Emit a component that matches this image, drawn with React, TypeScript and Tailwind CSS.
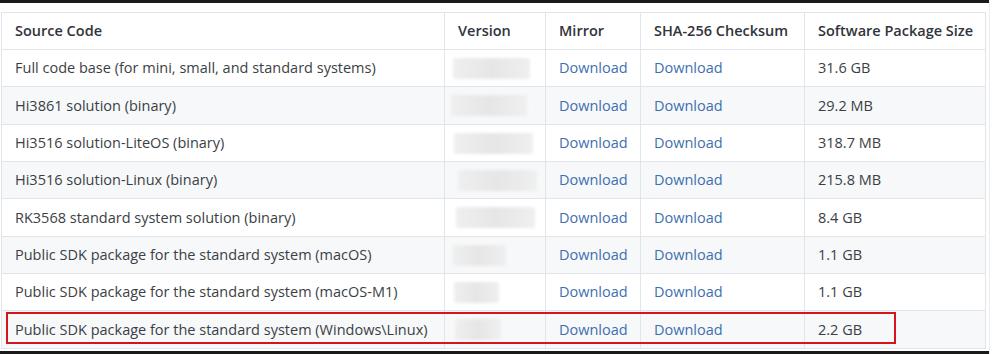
import React from "react";

const rows = [
  { name: "Full code base (for mini, small, and standard systems)", size: "31.6 GB", v: [453, 77], h: 37 },
  { name: "Hi3861 solution (binary)", size: "29.2 MB", v: [451, 76], h: 38 },
  { name: "Hi3516 solution-LiteOS (binary)", size: "318.7 MB", v: [454, 79], h: 37 },
  { name: "Hi3516 solution-Linux (binary)", size: "215.8 MB", v: [458, 79], h: 37 },
  { name: "RK3568 standard system solution (binary)", size: "8.4 GB", v: [456, 79], h: 38 },
  { name: "Public SDK package for the standard system (macOS)", size: "1.1 GB", v: [453, 53], h: 37 },
  { name: "Public SDK package for the standard system (macOS-M1)", size: "1.1 GB", v: [454, 45], h: 37 },
  { name: "Public SDK package for the standard system (Windows\\Linux)", size: "2.2 GB", v: [455, 46], h: 38 },
];

export default function App() {
  return (
    <div
      className="relative w-[1000px] h-[354px] bg-white overflow-hidden text-[14.5px] text-[#3b3f45]"
      style={{ fontFamily: '"Open Sans", "Noto Sans", sans-serif' }}
    >
      <div className="flex flex-col w-[990px] h-full border-r border-[#ececec]">
        <div className="h-[3px] bg-[#1a1a1a]" />
        <div className="h-[9px]" />
        <table className="table-fixed border-collapse ml-px w-[984px]">
          <colgroup>
            <col className="w-[443px]" />
            <col className="w-[101px]" />
            <col className="w-[95px]" />
            <col className="w-[164px]" />
            <col className="w-[181px]" />
          </colgroup>
          <thead>
            <tr className="h-[37px] bg-white">
              {["Source Code", "Version", "Mirror", "SHA-256 Checksum", "Software Package Size"].map((t) => (
                <th
                  key={t}
                  className="border border-[#e1e4e8] px-[13px] text-left font-semibold text-[#30343a] whitespace-nowrap"
                >
                  {t}
                </th>
              ))}
            </tr>
          </thead>
          <tbody>
            {rows.map((r, i) => (
              <tr
                key={r.name}
                className={i % 2 === 1 ? "bg-[#f6f8fa]" : "bg-white"}
                style={{ height: r.h }}
              >
                <td className="border border-[#e1e4e8] px-[13px] whitespace-nowrap">{r.name}</td>
                <td className="border border-[#e1e4e8] px-0">
                  <div
                    className="h-[21px] rounded-[2px] bg-gradient-to-r from-[#efefef] via-[#e6e6e6] to-[#efefef] blur-[1.5px]"
                    style={{ marginLeft: r.v[0] - 445, width: r.v[1] }}
                  />
                </td>
                <td className="border border-[#e1e4e8] px-[13px] text-[#3f6fae] whitespace-nowrap">Download</td>
                <td className="border border-[#e1e4e8] px-[13px] text-[#3f6fae] whitespace-nowrap">Download</td>
                <td className="border border-[#e1e4e8] px-[13px] whitespace-nowrap">{r.size}</td>
              </tr>
            ))}
          </tbody>
        </table>
        <div className="flex-1" />
        <div className="h-[3px] bg-[#1a1a1a]" />
      </div>
      <div className="absolute left-[6px] top-[312px] w-[890px] h-[32px] border-2 border-[#d7141d]" />
    </div>
  );
}
